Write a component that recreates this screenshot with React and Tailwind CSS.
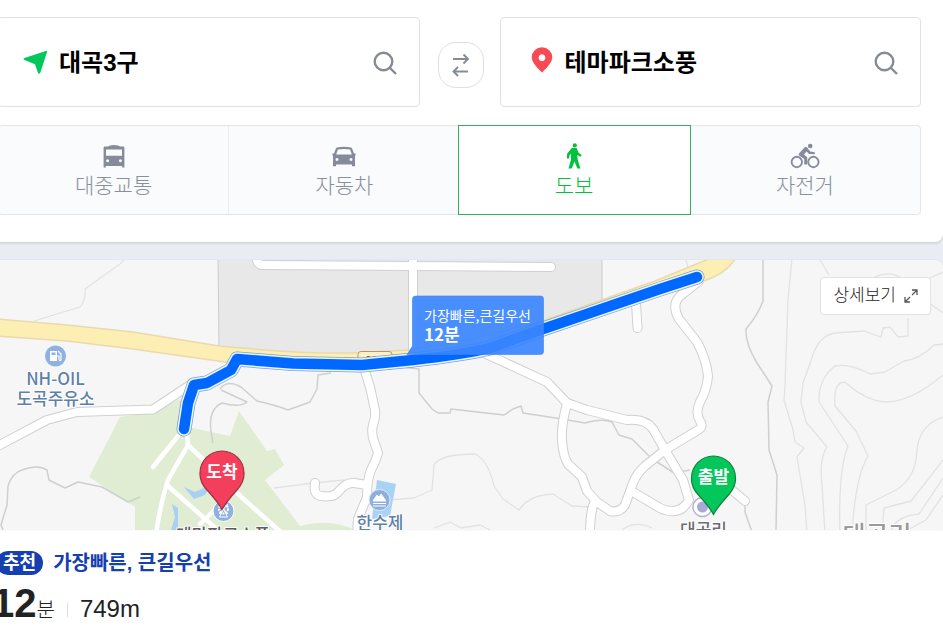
import React from "react";

const KR = "font-['Liberation_Sans','Noto_Sans_CJK_KR',sans-serif]";

function SearchIcon() {
  return (
    <svg viewBox="0 0 24 24" className="size-6 shrink-0" fill="none" stroke="#868b94" strokeWidth="2.400">
      <circle cx="10.500" cy="10.500" r="8.800" />
      <path d="M17 17l6 6" />
    </svg>
  );
}

function BusIcon() {
  return (
    <svg viewBox="0 0 22 24" className="h-6 w-[22px]" fill="#868b9c">
      <path fillRule="evenodd" d="M.6 3.800q0-1.200 1-1.200h3.200Q6.500 1 11 1t6.200 1.600h3.200q1 0 1 1.200V23.500h-2.200V22H2.800v1.500H.6zM3 5.400v6.400h16V5.400zM4.600 15.200a1.500 1.500 0 1 0 .01 0zM17.400 15.200a1.500 1.500 0 1 0 .01 0z" />
    </svg>
  );
}

function CarIcon() {
  return (
    <svg viewBox="0 0 24 24" className="size-6" fill="#868b9c">
      <path fillRule="evenodd" d="M5 3.600Q12 2 19 3.600q.9.200 1.200 1.100L22 9.500h1.600v2H23v10.800h-3V20.500H4v1.800H1V11.500H.4v-2H2l1.800-4.800q.3-.9 1.200-1.100zM5.900 5.500L4.200 10.600h15.600L18.100 5.500Q12 4.300 5.900 5.500zM5 14a1.500 1.500 0 1 0 .01 0zM19 14a1.500 1.500 0 1 0 .01 0z" />
    </svg>
  );
}

function WalkIcon() {
  return (
    <svg viewBox="0 0 16 26" className="h-[26px] w-4" fill="#03c13c">
      <circle cx="8.800" cy="2.400" r="2.100" />
      <path d="M5.800 5h4.800l2 4.700 3 2.300-1 1.800-3.400-1.700.5 4.400 2.700 9h-3L8.500 18.500l-2.800 7H2.500L5 16.500V10.500l-1.500 2-.5 3H.8l.4-4.900z" />
    </svg>
  );
}

function BikeIcon() {
  return (
    <svg viewBox="0 0 30 26" className="h-[26px] w-[30px]" fill="#868b9c">
      <circle cx="20.200" cy="3" r="2.300" />
      <g fill="none" stroke="#868b9c" strokeWidth="1.900">
        <circle cx="6.800" cy="19" r="5.200" />
        <circle cx="23.400" cy="19" r="5.200" />
      </g>
      <path d="M9 10.500l5.500-6q1.200-1.200 2.400-.2l3.300 4.200 4.600.8v2l-5.700-.4-2.500-2.300-2.600 3 3.200 2.600V21.500h-3v-5.600L9.500 12.800Q8 11.800 9 10.500z" />
    </svg>
  );
}

const modes = [
  { label: "대중교통", Icon: BusIcon },
  { label: "자동차", Icon: CarIcon },
  { label: "도보", Icon: WalkIcon },
  { label: "자전거", Icon: BikeIcon },
];

function PlaceField({ id, label, value, icon }) {
  return (
    <div className="flex h-[90px] min-w-0 flex-1 items-center rounded-[4px] border border-[#e2e2e4] bg-white pr-[22px] pl-6">
      <label htmlFor={id} className="shrink-0" aria-label={label}>
        {icon}
      </label>
      <input
        id={id}
        defaultValue={value}
        className="mx-3 h-10 min-w-0 flex-1 bg-transparent pb-1 text-2xl font-bold text-black outline-none"
      />
      <button type="button" aria-label={label} className="pt-[2px]">
        <SearchIcon />
      </button>
    </div>
  );
}

const roads = [
  "M-4 447L47 420L77 412L153 409.500L190 385",
  "M364 368L370 387L375 410Q376 417 373 425Q371 433 374 441L378 453Q376 461 371 470Q367 480 367 497L358 519L357 536",
  "M315 483Q313 496 322 496Q334 498 339 491Q346 482 354 483L367 485",
  "M484 353L547 382L567 403L587 410L627 420Q645 418 653 429L665 450L683 480Q686 490 689 500Q680 517 660 508L633 492",
  "M567 404Q561 425 562 440Q563 456 568 464L582 477L587 491L597 502L610 511Q620 513 625 505L633 483Q637 473 645 466L665 450L698 430Q704 427 700 421Q695 413 700 402Q707 390 708 376Q706 358 697 342L679 319Q671 305 680 296L699 281",
  "M594 503Q590 512 590 536",
  "M636 303L637.500 328",
  "M726 485L745 501",
  "M257 256Q256 265 263 265L412 266L551 267",
  "M413 256V352",
];

const parkPaths = [
  "M187 434L188 445L168 480Q160 505 156 534",
  "M178 436L153 467",
  "M188 445L206 462L238 494L283 534",
  "M168 486L220 532",
  "M200 524L225 500",
];

const boundaries = [
  "M3 530L1 525L7 505L8 486Q12 473 22 470Q38 464 47 470L49 480L65 488L78 482L102 487L128 502L140 497",
  "M220 389Q227 379 241 387L257 401Q275 405 288 410L310 402L317 389L318 375L331 373",
  "M221 390L247 402Q240 408 222 403Q208 409 211 432L213 443",
  "M401 367L419 369V393L432 409L438 413H450L451 409L504 415L513 409L521 406L523 413L562 419L585 423Q603 418 612 422L619 435L632 439L651 458L674 473L690 470",
  "M763 260L763 301Q758 315 746 329Q745 343 757 363L772 386L768 402L769 450L777 475L776 530",
  "M745 503V512L752 532",
];

const contours = [
  "M34 321L80 307Q86 301 85 289L120 264L126 258",
  "M274 488L313 483L345 480",
  "M388 500L414 498L432 490L434 465Q440 454 475 454Q488 460 494 486L503 499L519 510Q529 495 553 494L572 506L591 507",
  "M434 528L450 522L461 528L480 525L490 530",
  "M622 530Q635 520 652 528",
  "M686 260L689 271",
  "M792 258L788 300L785 385L784 400L793 430L795 442L804 448L797 457L805 505L807 534",
  "M803 383L801 402L806 422L827 447Q819 458 822 485L825 534",
  "M803 383L814 352Q821 335 835 333L864 331L881 337L883 328L890 327L898 337L908 336L908 318",
  "M870 374Q850 363 835 366Q818 379 819 402L848 446Q838 470 840 534",
  "M852 534Q855 478 868 456L856 431L835 406Q833 382 845 382Q866 401 886 402Q911 402 943 375",
  "M943 344L934 345Q920 359 904 361L885 372L870 374",
  "M943 417Q919 425 917 450Q916 478 896 490L866 505V534",
  "M882 534L884 508L911 501Q924 485 943 460",
  "M890 534Q894 516 919 514L943 478",
  "M900 534L926 520L943 495",
  "M820 260L829 275M875 277Q890 270 903 279M925 300L943 313M928 279L943 272",
];

function Pin({ x, y, fill, edge, label }) {
  return (
    <g transform={`translate(${x} ${y})`}>
      <path
        d="M0 36.500Q-4 29 -15 17Q-22.500 9 -22 0A22 22 0 0 1 22 0Q22.500 9 15 17Q4 29 0 36.500z"
        fill={fill}
        stroke={edge}
        strokeWidth="1.200"
      />
      <text y="5" textAnchor="middle" fontSize="17" fontWeight="700" fill="#fff">
        {label}
      </text>
    </g>
  );
}

function RouteMap() {
  const route =
    "M184 429L188 403L194 385L207 383L231 370L237 359L293 363.500L362 365L413 360Q460 355 490 348L543 329L660 289L697 277";
  return (
    <svg
      viewBox="0 260 943 270"
      preserveAspectRatio="xMidYMid slice"
      className="block h-[270px] w-full font-['Noto_Sans_CJK_KR',sans-serif]"
    >
      <rect x="0" y="260" width="943" height="270" fill="#f6f6f6" />
      <g fill="none" stroke="#e2e2e2" strokeWidth="1.300" strokeLinejoin="round">
        {contours.map((d) => (
          <path key={d} d={d} />
        ))}
      </g>
      <path d="M120 417L153 412L180 399L192 428L230 436L239 411L267 451L275 449L284 465L265 480L300 526Q330 518 355 530V534H135V507L89 477z" fill="#e0edd3" />
      <path d="M218 256L219 348L345 356L410 353L540 324L602 301V256z" fill="#e8e8e8" stroke="#cbcbcb" />
      <g fill="none" stroke="#cfcfcf" strokeWidth="1.500" strokeLinejoin="round">
        {boundaries.map((d) => (
          <path key={d} d={d} />
        ))}
      </g>
      <path d="M184 487L195 492L211 485L205 495L194 499zM172 504L178 508V530H171L175 517z" fill="#a9cff2" />
      <path d="M377 480L396 484L390 516L372 519z" fill="#a9d3f4" />
      <g fill="none" strokeLinecap="round" strokeLinejoin="round">
        {roads.map((d) => (
          <path key={d} d={d} stroke="#d0d0d0" strokeWidth="10" />
        ))}
        {roads.map((d) => (
          <path key={d} d={d} stroke="#fff" strokeWidth="8" />
        ))}
        {parkPaths.map((d) => (
          <path key={d} d={d} stroke="#fff" strokeWidth="4.500" />
        ))}
      </g>
      <path
        d="M-4 319L67 325L133 332L219 346Q300 354 352 353L410 350Q470 342 545 320L655 281L716 256H737Q728 273 704 281L548 334Q440 366 352 364L225 362L133 349L67 341L-4 336z"
        fill="#fdefb4"
        stroke="#ead9ae"
        strokeWidth="1.500"
      />
      <rect x="358" y="351.500" width="34" height="18" rx="3" fill="#fdf0c4" stroke="#b4986a" />
      <text x="375" y="364" textAnchor="middle" fontSize="11" fontWeight="700" fill="#665b45">907</text>
      <g fill="none" strokeLinecap="round" strokeLinejoin="round">
        <path d={route} stroke="#7ba0cc" strokeWidth="15" />
        <path d={route} stroke="#e8f5ff" strokeWidth="13.500" />
        <path d={route} stroke="#0068ff" strokeWidth="10.500" />
      </g>

      <g>
        <circle cx="55.500" cy="356" r="10.500" fill="#8eb1e2" />
        <path fillRule="evenodd" d="M50 351h7v10h-7zM51.500 352.500v2.500h4v-2.500z" fill="#fff" />
        <path d="M58 351l3 3v6q-1.500 1.500-2-1v-3h-2" fill="none" stroke="#fff" strokeWidth="1.200" />
        <circle cx="379.500" cy="500" r="10.500" fill="#8eaedc" stroke="#dce9f7" />
        <path d="M373 501l4-6 2 2 2-3 5 7zM373 503.500h13M373 506h13" fill="#fff" stroke="#fff" strokeWidth="1" />
        <circle cx="223.500" cy="511" r="10.500" fill="#8eb1e2" stroke="#fff" />
        <circle cx="223.500" cy="509" r="4.500" fill="none" stroke="#fff" strokeWidth="2" strokeDasharray="2 1" />
        <path d="M223.500 509l-4 8h8zM219 504l9 10M228 504l-9 10" fill="none" stroke="#fff" />
        <circle cx="702.500" cy="507" r="9.500" fill="#fff" stroke="#b4b4ce" strokeWidth="1.500" />
        <circle cx="702.500" cy="507" r="5.500" fill="#aaa9d6" />
      </g>

      <g textAnchor="middle" fontWeight="500" fontSize="17" stroke="#fff" strokeWidth="2" paintOrder="stroke" strokeLinejoin="round">
        <text x="55.500" y="385" fill="#5f7fab">NH-OIL</text>
        <text x="55.500" y="405" fill="#5f7fab">도곡주유소</text>
        <text x="380" y="529" fill="#5f7fab">한수제</text>
        <text x="223" y="541" fill="#5c5c5c">테마파크소풍</text>
        <text x="703.500" y="536" fill="#6c6c74">대곡리</text>
        <text x="877" y="544" fill="#9a9a9a" fontSize="25">대곡리</text>
      </g>

      <Pin x={222} y={473} fill="#f33f5c" edge="#9c3044" label="도착" />
      <Pin x={713.5} y={478} fill="#03c75a" edge="#11803f" label="출발" />

      <g>
        <path
          d="M416 296H540.500Q543.500 296 543.500 299V351.500Q543.500 354.500 540.500 354.500H407L412.500 346V299Q412.500 296 416 296z"
          fill="#3a86ff"
          fillOpacity="0.92"
          stroke="#3f83e6"
          strokeOpacity="0.6"
        />
        <text x="424" y="321" fontSize="14" fill="#fff">가장빠른,큰길우선</text>
        <text x="424" y="341" fontSize="17" fontWeight="700" fill="#fff">12분</text>
      </g>
    </svg>
  );
}

export default function App() {
  return (
    <main className={`min-h-screen overflow-hidden bg-white ${KR}`}>
      <div className="bg-[#e9ecf2]">
        <header className="-ml-2 flex flex-col gap-[18px] rounded-br-lg bg-white pt-[17px] pr-[22px] pb-[27px] pl-[6px] shadow-[0_1px_3px_rgba(0,0,0,0.16)]">
          <div className="flex items-center">
            <PlaceField
              id="start"
              label="출발지 검색"
              value="대곡3구"
              icon={
                <svg viewBox="0 0 24 24" className="size-6" fill="#03c75a">
                  <path d="M22.800.9L1.500 8q-2 .8 0 2l10.500 4.200 3 8.800q1.200 1.600 2.200 0L24 2.200q.4-1.700-1.200-1.300z" />
                </svg>
              }
            />
            <button
              type="button"
              aria-label="출발지와 도착지 바꾸기"
              className="mt-[6px] mr-4 ml-[18px] grid size-[46px] shrink-0 place-items-center rounded-[18px] border border-[#dfdfe2] bg-white"
            >
              <svg viewBox="0 0 18 24" className="h-6 w-[18px]" fill="none" stroke="#868b94" strokeWidth="1.900">
                <path d="M1 6h15M11.500 1.500l4.500 4.500-4.500 4.500M16 18.500H1.500M6 14L1.500 18.500 6 23" />
              </svg>
            </button>
            <PlaceField
              id="goal"
              label="도착지 검색"
              value="테마파크소풍"
              icon={
                <svg viewBox="0 0 22 26" className="mb-1 ml-[6px] h-[26px] w-[22px]" fill="#f84a55">
                  <path fillRule="evenodd" d="M11 25.500Q1 16.500.7 10.500A10.300 10.300 0 0 1 21.300 10.500Q21 16.500 11 25.500zM11 7.300a3.400 3.400 0 1 0 .01 0z" />
                </svg>
              }
            />
          </div>
          <nav className="grid h-[90px] grid-cols-4 rounded-[4px] border border-[#e2e4e8] bg-[#f9fbfd]">
            {modes.map(({ label, Icon }, i) => {
              const active = i === 2;
              return (
                <button
                  key={label}
                  type="button"
                  aria-pressed={active}
                  className={
                    active
                      ? "-my-px -mr-px -ml-[2px] flex flex-col items-center justify-center border border-[#2fb05c] bg-white pt-1 text-[#03c13c]"
                      : i === 0
                        ? "flex flex-col items-center justify-center border-r border-[#e9ebee] pt-1 text-[#8a8f9c]"
                        : "flex flex-col items-center justify-center pt-1 text-[#8a8f9c]"
                  }
                >
                  <span className="flex h-7 items-center">
                    <Icon />
                  </span>
                  <span className="text-[21px] leading-8 font-light">{label}</span>
                </button>
              );
            })}
          </nav>
        </header>
        <section className="relative mt-[18px] overflow-hidden rounded-tr-lg bg-[#f6f6f6] shadow-[0_0_1px_rgba(0,0,0,0.2)]">
          <RouteMap />
          <button
            type="button"
            className="absolute top-[17px] right-3 flex h-[38px] items-center gap-2 rounded-[4px] border border-[#e2e2e2] bg-white px-3 text-[17px] font-light text-[#222]"
          >
            상세보기
            <svg viewBox="0 0 14 14" className="size-[14px]" fill="none" stroke="#555" strokeWidth="1.300">
              <path d="M8 1h5v5M13 1L8 6M6 13H1V8M1 13l5-5" />
            </svg>
          </button>
        </section>
      </div>
      <section className="-ml-2 pt-[21px]">
        <h2 className="flex items-center gap-[10px] text-xl leading-6 font-bold text-[#163fb0]">
          <span className="ml-1 rounded-full bg-[#163fb0] px-[7px] text-lg leading-6 text-white">추천</span>
          가장빠른, 큰길우선
        </h2>
        <p className="mt-1 flex items-baseline text-[#222]">
          <strong className="text-[40px] leading-[48px] font-bold">12</strong>
          <span className="text-xl font-light">분</span>
          <span className="mx-3 h-[14px] w-px bg-[#dcdcdc]" />
          <span className="text-2xl">749m</span>
        </p>
      </section>
    </main>
  );
}
